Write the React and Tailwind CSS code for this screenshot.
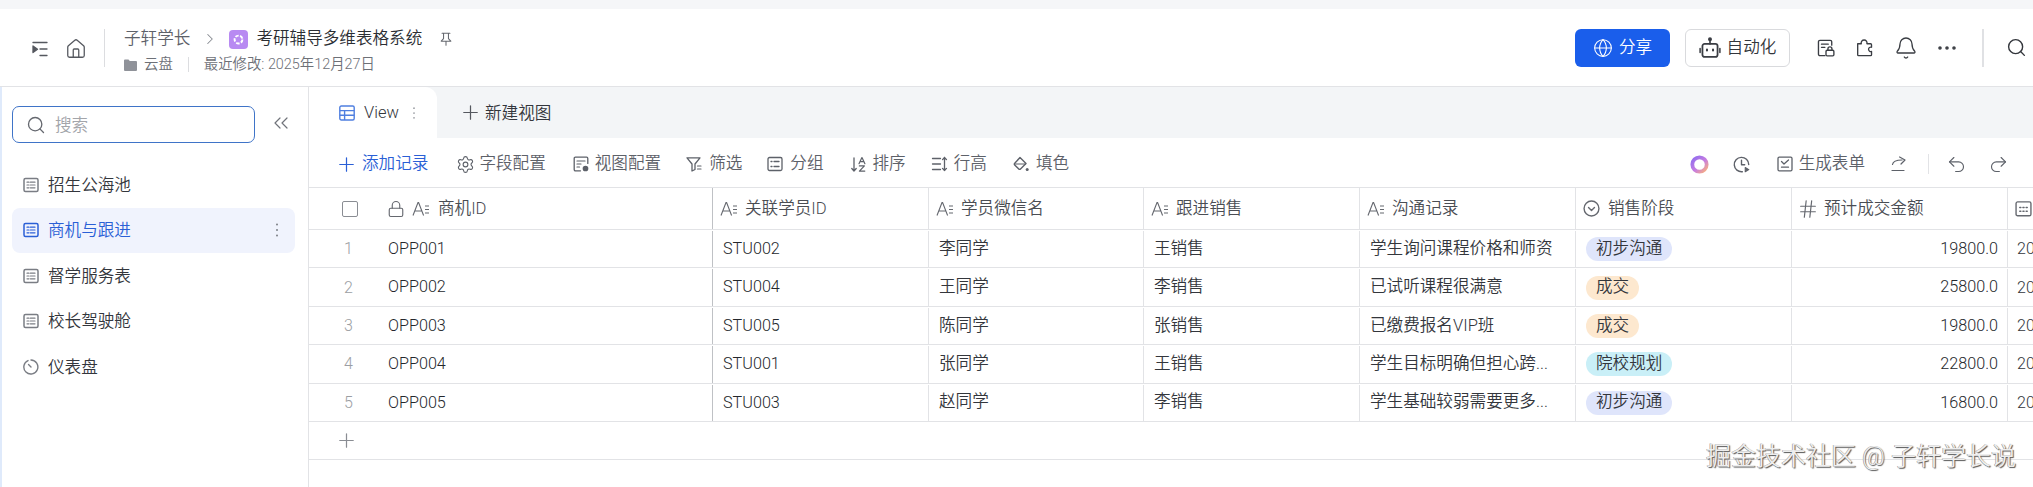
import React from "react";
import { Home, Globe, Bell, Ellipsis, Search, ChevronsLeft, ChevronRight, Settings, Undo2, Redo2, Lock, Hash } from "lucide-react";

const S = ({ className = "", children, vb = 16 }) => (
  <svg viewBox={`0 0 ${vb} ${vb}`} fill="none" stroke="currentColor" strokeWidth="1.3" strokeLinecap="round" strokeLinejoin="round" className={`shrink-0 ${className}`}>
    {children}
  </svg>
);

const PlusIcon = ({ className = "" }) => (
  <S className={className}>
    <path d="M.8 8h14.4M8 .8v14.4" />
  </S>
);

const TextField = ({ className = "w-[18px] h-[16px]" }) => (
  <svg viewBox="0 0 18 16" fill="none" stroke="currentColor" strokeWidth="1.1" className={`shrink-0 ${className}`}>
    <path d="M1 14.5 6 1.5h.6l5 13M2.8 10h7" />
    <path d="M13 5h4M13 8.5h4M13 12h4" />
  </svg>
);
const SheetIcon = ({ className = "" }) => (
  <S className={`w-[16px] h-[16px] ${className}`}>
    <rect x="1" y="1.5" width="14" height="13" rx="1.5" strokeWidth="1.5" />
    <path d="M4 5.2h2M7.4 5.2H12M4 8h2M7.4 8H12M4 10.8h2M7.4 10.8H12" strokeWidth="1.2" />
  </S>
);

const Tool = ({ icon, label, className = "", gap = "gap-[6px]" }) => (
  <div className={`flex items-center ${gap} text-[#5d6169] ${className}`}>
    {icon}
    <span>{label}</span>
  </div>
);

function ChevronCircle() {
  return (
    <S className="w-[17px] h-[17px] mr-px">
      <circle cx="8" cy="8" r="7" />
      <path d="M5.2 7 8 9.8 10.8 7" />
    </S>
  );
}

const cols = [
  { w: "w-[216px]", icon: <TextField />, name: "关联学员ID" },
  { w: "w-[215px]", icon: <TextField />, name: "学员微信名" },
  { w: "w-[216px]", icon: <TextField />, name: "跟进销售" },
  { w: "w-[216px]", icon: <TextField />, name: "沟通记录" },
  { w: "w-[216px]", icon: <ChevronCircle />, name: "销售阶段" },
  { w: "w-[216px]", icon: <Hash className="w-[22px] h-[22px] -mx-[2px] -my-[3px]" strokeWidth={1.3} />, name: "预计成交金额" },
];

const pillStyle = {
  初步沟通: "bg-[#dfe5fb]",
  成交: "bg-[#fde8cf]",
  院校规划: "bg-[#c9eff7]",
};

const rows = [
  ["OPP001", "STU002", "李同学", "王销售", "学生询问课程价格和师资", "初步沟通", "19800.0"],
  ["OPP002", "STU004", "王同学", "李销售", "已试听课程很满意", "成交", "25800.0"],
  ["OPP003", "STU005", "陈同学", "张销售", "已缴费报名VIP班", "成交", "19800.0"],
  ["OPP004", "STU001", "张同学", "王销售", "学生目标明确但担心跨...", "院校规划", "22800.0"],
  ["OPP005", "STU003", "赵同学", "李销售", "学生基础较弱需要更多...", "初步沟通", "16800.0"],
];

const navItems = ["招生公海池", "商机与跟进", "督学服务表", "校长驾驶舱"];

export default function App() {
  return (
    <div className="relative w-[2033px] h-[487px] overflow-hidden flex flex-col bg-white text-[#33363c] text-[16.6px] leading-[24px] font-[350] font-['Roboto','Noto_Sans_CJK_SC',sans-serif]">
      <div className="h-[9px] shrink-0 bg-[#f5f6f8]" />

      {/* Top header */}
      <header className="h-[78px] shrink-0 border-b border-[#e2e3e6] flex items-center pl-[32px] pr-[6px]">
        <S className="w-[16px] h-[16px] text-[#55585f] mt-[2px]">
          <path d="M1 1.5h14M8 8h7M8 14.5h7" strokeWidth="1.3" />
          <path d="M1 5l4.5 3.3L1 11.5z" fill="currentColor" />
        </S>
        <Home className="w-[22px] h-[22px] ml-[17px] mt-[2px] text-[#55585f]" strokeWidth={1.4} />
        <div className="w-px h-[38px] bg-[#dcdde0] ml-[17px]" />
        <div className="ml-[19px] flex flex-col mt-[7px]">
          <div className="flex items-center h-[24px]">
            <span className="text-[#5d6169]">子轩学长</span>
            <ChevronRight className="w-[18px] h-[18px] ml-[11px] text-[#888b92]" strokeWidth={1.4} />
            <div className="ml-[10px] w-[19px] h-[19px] rounded-[4px] bg-[#b88af2] flex items-center justify-center">
              <svg viewBox="0 0 12 12" className="w-[13px] h-[13px]" fill="none" stroke="white" strokeWidth="1.8" strokeDasharray="3.2 1.3">
                <circle cx="6" cy="6" r="3.6" />
              </svg>
            </div>
            <span className="ml-[8px] text-[#2b2e33]">考研辅导多维表格系统</span>
            <S className="ml-[17px] w-[14px] h-[16px] text-[#65686f]">
              <path d="M3.5 1.5h9M5.2 1.5v6L2.5 10.5h11l-2.7-3v-6M8 10.5V15" strokeWidth="1.2" />
            </S>
          </div>
          <div className="flex items-center h-[21px] mt-[3px] text-[14.4px] text-[#6d7077]">
            <svg viewBox="0 0 13 12" className="w-[13px] h-[12px]" fill="#8f9299">
              <path d="M0 1.5A1 1 0 0 1 1 .5h3.5l1.3 1.5H12a1 1 0 0 1 1 1V11a1 1 0 0 1-1 1H1a1 1 0 0 1-1-1z" />
            </svg>
            <span className="ml-[7px]">云盘</span>
            <div className="w-px h-[15px] bg-[#dcdde0] ml-[15px]" />
            <span className="ml-[15px]">最近修改: 2025年12月27日</span>
          </div>
        </div>

        <div className="ml-auto flex items-center">
          <button className="w-[95px] h-[38px] rounded-[6px] bg-[#1a5eeb] text-white flex items-center justify-center gap-[6px]">
            <Globe className="w-[20px] h-[20px]" strokeWidth={1.3} />
            <span>分享</span>
          </button>
          <button className="ml-[15px] w-[105px] h-[38px] rounded-[6px] border border-[#d9dadd] text-[#33363c] flex items-center justify-center gap-[6px]">
            <S className="w-[22px] h-[22px] text-[#3a3d43]">
              <rect x="2.5" y="5" width="11" height="9.5" rx="1.6" strokeWidth="1.3" />
              <path d="M8 5V2.2" strokeWidth="1.2" />
              <circle cx="8" cy="1.6" r=".8" fill="currentColor" />
              <path d="M.8 8.3v3M15.2 8.3v3" strokeWidth="1.1" />
              <path d="M5.8 9.2v.6M10.2 9.2v.6" strokeWidth="1.5" />
            </S>
            <span>自动化</span>
          </button>
          <S className="ml-[27px] w-[18px] h-[20px] text-[#3a3d43]">
            <path d="M7 14.8H2.6a1.3 1.3 0 0 1-1.3-1.3V2.5a1.3 1.3 0 0 1 1.3-1.3h9.2a1.3 1.3 0 0 1 1.3 1.3v3" strokeWidth="1.2" />
            <path d="M4 4.6h6M4 7.4h3" strokeWidth="1.2" />
            <rect x="8" y="10" width="7" height="5" rx="1" strokeWidth="1.2" />
            <path d="M9.7 10V8.8a1.8 1.8 0 0 1 3.6 0V10" strokeWidth="1.2" />
          </S>
          <S className="ml-[21px] w-[18px] h-[18px] text-[#3a3d43]">
            <path d="M1.5 4.2h3.2a2.6 2.6 0 1 1 5 0h3.3a.8.8 0 0 1 .8.8v2.3a2 2 0 1 0 0 3.8v2.9a.8.8 0 0 1-.8.8H2.3a.8.8 0 0 1-.8-.8z" strokeWidth="1.2" />
          </S>
          <Bell className="ml-[20px] w-[24px] h-[24px] text-[#3a3d43]" strokeWidth={1.3} />
          <Ellipsis className="ml-[17px] w-[24px] h-[24px] text-[#3a3d43]" strokeWidth={1.6} />
          <div className="ml-[23px] w-[2px] h-[38px] bg-[#e0e1e4]" />
          <Search className="ml-[22px] w-[21px] h-[21px] text-[#33363c]" strokeWidth={1.6} />
        </div>
      </header>

      <div className="flex-1 flex min-h-0">
        {/* Sidebar */}
        <aside className="w-[309px] shrink-0 border-r border-[#e2e3e6] border-l-[2px] border-l-[#dfeafb] pl-[10px] pr-[13px] pt-[19px]">
          <div className="flex items-center">
            <div className="w-[243px] h-[37px] rounded-[7px] border border-[#3f74c8] flex items-center pl-[13px]">
              <Search className="w-[20px] h-[20px] text-[#65686f]" strokeWidth={1.6} />
              <span className="ml-[9px] pt-[2px] text-[#a3a5aa]">搜索</span>
            </div>
            <ChevronsLeft className="ml-[14px] w-[24px] h-[24px] -mt-[3px] text-[#70737a]" strokeWidth={1.2} />
          </div>
          <nav className="mt-[19px] flex flex-col">
            {navItems.map((n, i) => (
              <div
                key={n}
                className={`h-[45.5px] flex items-center pl-[11px] rounded-[8px] w-[283px] ${i === 1 ? "bg-[#f0f3fd] text-[#2a5fd6]" : "text-[#33363c]"}`}
              >
                <SheetIcon className={i === 1 ? "text-[#2a5fd6]" : "text-[#7a7d84]"} />
                <span className="ml-[9px] pt-[2px]">{n}</span>
                {i === 1 && (
                  <svg viewBox="0 0 4 16" className="ml-auto mr-[16px] w-[4px] h-[16px]" fill="#7d8087">
                    <circle cx="2" cy="2.5" r="1" />
                    <circle cx="2" cy="8" r="1" />
                    <circle cx="2" cy="13.5" r="1" />
                  </svg>
                )}
              </div>
            ))}
            <div className="h-[45.5px] flex items-center pl-[11px] w-[283px]">
              <S className="w-[16px] h-[16px] text-[#7a7d84]">
                <path d="M5 1.6a7 7 0 1 0 3-.6" strokeWidth="1.4" />
                <path d="M5.5 5.5 8 8" strokeWidth="1.4" />
              </S>
              <span className="ml-[9px] pt-[2px]">仪表盘</span>
            </div>
          </nav>
        </aside>

        {/* Main */}
        <main className="flex-1 min-w-0 flex flex-col">
          <div className="h-[51px] shrink-0 flex bg-[#f3f5f7]">
            <div className="w-[128px] bg-white rounded-tr-[12px] flex items-center pl-[30px]">
              <svg viewBox="0 0 16 16" className="w-[16px] h-[16px]" fill="none" stroke="#4f7fe0" strokeWidth="1.4">
                <rect x=".8" y="1" width="14.4" height="14" rx="1.5" />
                <path d="M.8 5.6h14.4M.8 10.3h14.4M5.6 5.6V15" />
              </svg>
              <span className="ml-[9px] pt-[1px] text-[16.5px]">View</span>
              <svg viewBox="0 0 4 16" className="ml-[13px] w-[4px] h-[14px]" fill="#9a9da3">
                <circle cx="2" cy="2.5" r="1" />
                <circle cx="2" cy="8" r="1" />
                <circle cx="2" cy="13.5" r="1" />
              </svg>
            </div>
            <div className="ml-[26px] flex items-center">
              <PlusIcon className="w-[15px] h-[15px] text-[#55585f]" />
              <span className="ml-[7px] pt-[2px] text-[#33363c]">新建视图</span>
            </div>
          </div>

          {/* Toolbar */}
          <div className="h-[49px] shrink-0 flex items-center pt-[3px] pl-[30px] pr-[24px]">
            <div className="flex items-center gap-[8px] text-[#2a5fd6]">
              <PlusIcon className="w-[15px] h-[15px]" />
              <span>添加记录</span>
            </div>
            <Tool
              className="ml-[29px]"
              icon={<Settings className="w-[19px] h-[19px] -mx-[1.5px]" strokeWidth={1.4} />}
              label="字段配置"
            />
            <Tool
              className="ml-[27px]"
              icon={
                <S className="w-[16px] h-[16px]">
                  <path d="M7.5 14.8H2.4a1.2 1.2 0 0 1-1.2-1.2V2.4a1.2 1.2 0 0 1 1.2-1.2h11.2a1.2 1.2 0 0 1 1.2 1.2v5" strokeWidth="1.3" />
                  <path d="M4 5h8M4 8h4M4 11h2.5" strokeWidth="1.2" />
                  <circle cx="12.5" cy="12.5" r="2.2" fill="currentColor" />
                </S>
              }
              label="视图配置"
            />
            <Tool
              className="ml-[25px]"
              gap="gap-[7px]"
              icon={
                <S className="w-[16px] h-[16px]">
                  <path d="M1 1.8h13L9 8v5.5L6 15V8z" strokeWidth="1.3" />
                  <path d="M11.5 10h3.5M11.5 13h3.5" strokeWidth="1.2" />
                </S>
              }
              label="筛选"
            />
            <Tool
              className="ml-[25px]"
              gap="gap-[7px]"
              icon={
                <S className="w-[16px] h-[16px]">
                  <rect x="1" y="1.5" width="14" height="13" rx="1.5" strokeWidth="1.3" />
                  <path d="M4 5.5h1M7 5.5h5M4 10.5h1M7 10.5h5" strokeWidth="1.3" />
                </S>
              }
              label="分组"
            />
            <Tool
              className="ml-[27px]"
              icon={
                <S className="w-[16px] h-[17px]">
                  <path d="M3 1.5v13M.8 12l2.2 2.6L5.2 12" strokeWidth="1.3" />
                  <path d="M8 7.2 10.8 1.2h.3l2.8 6M9 5.2h4M8.4 9.4h5L8.4 14.6h5.4" strokeWidth="1.2" />
                </S>
              }
              label="排序"
            />
            <Tool
              className="ml-[25px]"
              icon={
                <S className="w-[17px] h-[16px]">
                  <path d="M1 2.5h8M1 8h8M1 13.5h8" strokeWidth="1.3" />
                  <path d="M13 1.5v13M11 3.6l2-2.1 2 2.1M11 12.4l2 2.1 2-2.1" strokeWidth="1.3" />
                </S>
              }
              label="行高"
            />
            <Tool
              className="ml-[26px]"
              gap="gap-[7px]"
              icon={
                <S className="w-[16px] h-[16px]">
                  <path d="M7 1.5 13 7.5 7.5 13a1.2 1.2 0 0 1-1.7 0L1.7 9a1.2 1.2 0 0 1 0-1.7z" strokeWidth="1.4" />
                  <path d="M1.5 8h11" strokeWidth="1.2" />
                  <circle cx="14.2" cy="13.4" r="1.5" fill="currentColor" stroke="none" />
                </S>
              }
              label="填色"
            />

            <div className="ml-auto flex items-center text-[#5d6169]">
              <svg viewBox="0 0 18 18" className="w-[19px] h-[19px] mr-[24px]" fill="none" strokeWidth="3.6">
                <defs>
                  <linearGradient id="ring" x1="0" y1="0" x2="1" y2="1">
                    <stop offset="0" stopColor="#8f6cf0" />
                    <stop offset=".55" stopColor="#c77de0" />
                    <stop offset="1" stopColor="#fbb27a" />
                  </linearGradient>
                </defs>
                <circle cx="9" cy="9" r="6.8" stroke="url(#ring)" />
              </svg>
              <S className="w-[17px] h-[17px]">
                <path d="M8.8 14.8A6.8 6.8 0 1 1 14.8 8" strokeWidth="1.3" />
                <path d="M8 4v4.2h3" strokeWidth="1.3" />
                <path d="M11.5 10.8v4l3.4-2z" fill="currentColor" strokeWidth="1" />
              </S>
              <Tool
                className="ml-[27px]"
                icon={
                  <S className="w-[16px] h-[16px]">
                    <rect x="1" y="1.2" width="14" height="13.6" rx="1.3" strokeWidth="1.3" />
                    <path d="M4.5 5.5 7 8l4.5-4M4.5 11.2h7" strokeWidth="1.3" />
                  </S>
                }
                label="生成表单"
              />
              <S className="ml-[26px] w-[16px] h-[16px]">
                <path d="M1.5 8.5C2 5.5 5 4 11 4M8.6 1l5.4 3-4 4M1 14.5h12" strokeWidth="1.2" />
              </S>
              <div className="ml-[21px] w-px h-[20px] bg-[#e2e3e6]" />
              <Undo2 className="ml-[17px] w-[21px] h-[21px]" strokeWidth={1.3} />
              <Redo2 className="ml-[21px] w-[21px] h-[21px]" strokeWidth={1.3} />
            </div>
          </div>

          {/* Table */}
          <div className="border-t border-[#e2e3e6] flex-1">
            <div className="h-[42px] flex border-b border-[#e2e3e6] text-[#4a4d53]">
              <div className="w-[404px] shrink-0 flex items-center border-r border-[#bfc1c5]">
                <div className="ml-[33px] w-[16px] h-[16px] rounded-[2px] border-[1.5px] border-[#8a8d93]" />
                <Lock className="ml-[29px] w-[18px] h-[18px] text-[#65686f]" strokeWidth={1.5} />
                <TextField className="ml-[7px] w-[18px] h-[16px] text-[#65686f]" />
                <span className="ml-[8px] pt-[1px]">商机ID</span>
              </div>
              {cols.map((c) => (
                <div key={c.name} className={`${c.w} shrink-0 flex items-center pl-[7px] gap-[7px] border-r border-[#e2e3e6]`}>
                  <span className="text-[#65686f] flex">{c.icon}</span>
                  <span className="pt-[1px]">{c.name}</span>
                </div>
              ))}
              <div className="flex-1 flex items-center pl-[7px] text-[#65686f]">
                <S className="w-[17px] h-[17px]">
                  <rect x="1" y="1.8" width="14" height="13" rx="1.5" strokeWidth="1.3" />
                  <path d="M4.5 7h1M7.5 7h1M10.5 7h1M4.5 10.5h1M7.5 10.5h1M10.5 10.5h1" strokeWidth="1.4" />
                </S>
              </div>
            </div>
            {rows.map((r, i) => (
              <div key={r[0]} className="h-[38.4px] flex border-b border-[#e2e3e6] leading-none pt-px">
                <div className="w-[404px] shrink-0 flex items-center border-r border-[#bfc1c5]">
                  <span className="w-[79px] text-center text-[#9b9ea3] text-[16px]">{i + 1}</span>
                  <span className="text-[16.2px] text-[#24272c]">{r[0]}</span>
                </div>
                <div className="w-[216px] shrink-0 flex items-center pl-[10px] border-r border-[#e2e3e6] text-[16.2px] text-[#24272c]">{r[1]}</div>
                <div className="w-[215px] shrink-0 flex items-center pl-[10px] border-r border-[#e2e3e6]">{r[2]}</div>
                <div className="w-[216px] shrink-0 flex items-center pl-[10px] border-r border-[#e2e3e6]">{r[3]}</div>
                <div className="w-[216px] shrink-0 flex items-center pl-[10px] border-r border-[#e2e3e6]">{r[4]}</div>
                <div className="w-[216px] shrink-0 flex items-center pl-[10px] border-r border-[#e2e3e6]">
                  <span className={`h-[24px] px-[10px] rounded-full flex items-center ${pillStyle[r[5]]}`}>{r[5]}</span>
                </div>
                <div className="w-[216px] shrink-0 flex items-center justify-end pr-[9px] border-r border-[#e2e3e6] text-[16.2px] text-[#24272c]">{r[6]}</div>
                <div className="flex-1 flex items-center pl-[9px] text-[16px] whitespace-nowrap overflow-hidden">2025-12-01</div>
              </div>
            ))}
            <div className="h-[38px] flex items-center pl-[30px] border-b border-[#e2e3e6]">
              <PlusIcon className="w-[15px] h-[15px] text-[#8a8d93]" />
            </div>
          </div>
        </main>
      </div>

      {/* Watermark */}
      <div className="absolute right-[17px] bottom-[16px] text-[25px] leading-[28px] whitespace-nowrap text-[#eeeeee] [text-shadow:1px_1px_1px_#555,-0.5px_-0.5px_0.5px_#888]">
        掘金技术社区 @ 子轩学长说
      </div>
    </div>
  );
}
